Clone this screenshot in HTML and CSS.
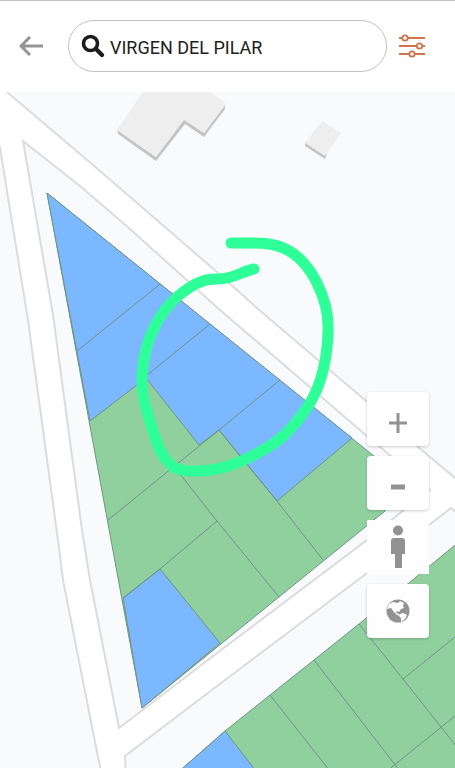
FILE: index.html
```
<!DOCTYPE html>
<html lang="es">
<head>
<meta charset="UTF-8">
<meta name="viewport" content="width=device-width, initial-scale=1.0">
<title>Mapa</title>
<link rel="stylesheet" href="styles.css">
</head>
<body>

<header class="topbar">
  <button class="icon-btn back" type="button" aria-label="Volver">
    <svg width="24" height="20" viewBox="0 0 24 20"><path d="M24 10H3M11 1L2 10l9 9" fill="none" stroke="#959595" stroke-width="3"/></svg>
  </button>
  <form class="search">
    <label for="q" aria-label="Buscar">
      <svg width="24" height="24" viewBox="0 0 24 24"><circle cx="9.500" cy="9.500" r="7" fill="none" stroke="#1c1c1c" stroke-width="3.600"/><path d="M15 15l6 6" stroke="#1c1c1c" stroke-width="4.200" stroke-linecap="round"/></svg>
    </label>
    <input id="q" type="text" value="VIRGEN DEL PILAR">
  </form>
  <button class="icon-btn filters" type="button" aria-label="Filtros">
    <svg width="26" height="24" viewBox="0 0 26 24" fill="#fff" stroke="#d0744c" stroke-width="1.800">
      <path d="M0 4h26M0 12h26M0 20h26"/>
      <circle cx="6" cy="4" r="2.700"/>
      <circle cx="20.500" cy="12" r="2.700"/>
      <circle cx="13" cy="20" r="2.700"/>
    </svg>
  </button>
</header>

<main class="map">
  <svg class="map-canvas" viewBox="0 92 455 676" preserveAspectRatio="xMinYMin slice" aria-hidden="true">
    <!-- blocks between the streets -->
    <g class="block">
      <path d="M-5 82L7 92 100 171 217 272 258 309 365 400 418 447 460 482V80z"/>
      <path d="M-5 130L0 148 28 320 58 540 63 580 98 757 102 775H-5z"/>
      <path d="M23 141L80 186 130 229 220 310 367 436 392 457 430 490 400 513 367 540 225 647 119 728 90 580 82 530 53 315z"/>
      <path d="M126 775L125 756 225 680 367 573 451 508 460 515V775z"/>
    </g>

    <g class="building">
      <path class="wall" d="M117 130l1 4 38 27 29-37 19 13 21-28v-4l-21 28-20-14-28 38z"/>
      <path d="M143 92L117 130l39 27 28-37 20 13 22-29-16-12z"/>
      <path class="wall" d="M305 142v4l20 13 2-5z"/>
      <path d="M322 121l-17 22 20 13 16-23z"/>
    </g>

    <!-- parcels -->
    <path class="free" d="M47 193L410 485 385 511 142 708z"/>
    <path class="taken" d="M47 193L352 438 277 501 219 430 199 445 146 378 90 421z"/>
    <path class="taken" d="M123 598L160 569 220 643 142 708z"/>
    <path class="free" d="M175 775L225 731 270 695 314 660 359 624 460 541V775z"/>
    <path class="taken" d="M175 775L225 731 259 775z"/>
    <path class="limits" d="M77 351L160 284M146 376L210 324M108 520L219 430 280 380M123 598L160 569 217 521
      M219 430L277 501 323 560M172 464L217 521 279 597
      M270 695L333 775M314 660L403 775M359 624L403 679 460 751M403 679L460 633M382 775L460 712"/>

    <!-- hand drawn mark -->
    <path class="mark" d="M231 243C252 243 267 242 281 247C297 253 309 267 317 283C325 299 329 315 328 333C327 359 322 383 310 403C298 422 283 440 263 450C241 463 219 471 197 471C187 471 178 471 172 466C163 458 159 449 155 437C148 415 141 396 142 377C143 359 146 344 153 330C159 317 167 306 177 297C185 290 194 284 203 281C211 278 219 280 227 278C237 276 244 271 254 269"/>
  </svg>

  <div class="controls">
    <button type="button" aria-label="Acercar">
      <svg class="low" width="20" height="20" viewBox="0 0 20 20"><path d="M10 0v20M1 10h18" stroke="#929292" stroke-width="3"/></svg>
    </button>
    <button type="button" aria-label="Alejar">
      <svg class="low" width="20" height="20" viewBox="0 0 20 20"><path d="M3 10h14" stroke="#929292" stroke-width="5"/></svg>
    </button>
    <button class="square" type="button" aria-label="Vista de calle">
      <svg width="16" height="44" viewBox="0 0 16 44" fill="#929292"><circle cx="8" cy="5.500" r="5"/><path d="M4 13h8q3 0 3 3v13h-3v14H5V29H1V16q0-3 3-3z"/></svg>
    </button>
    <button type="button" aria-label="Tipo de mapa">
      <svg width="24" height="24" viewBox="0 0 24 24">
        <circle cx="12" cy="12" r="11.500" fill="#929292"/>
        <path d="M3 5l4-2 5 1 2-2 4 2-1 3 1 2-3 1-2 3-2-1-1 2 3 1 1 2-3-1-3-3-3-4-4 1z" fill="#fff"/>
        <path d="M14 15l3-1 4 2-2 4-4 3v-4l-2-2z" fill="#fff"/>
      </svg>
    </button>
  </div>
</main>

</body>
</html>
```
FILE: styles.css
```
* {
  box-sizing: border-box;
}
body {
  display: flex;
  flex-direction: column;
  min-height: 100vh;
  margin: 0;
  background-color: #fff;
  font-family: Roboto, Arial, sans-serif;
}
button {
  display: flex;
  justify-content: center;
  align-items: center;
  padding: 0;
  border: none;
  background: #fefefe;
  cursor: pointer;
}
.topbar {
  display: flex;
  align-items: center;
  gap: 12px;
  padding: 19px 30px 20px 19px;
  border-top: 1px solid #c2c2c2;
}
.icon-btn {
  flex: none;
  height: 24px;
  background: none;
}
.back {
  width: 24px;
  margin-right: 13px;
}
.search {
  display: flex;
  flex: 1;
  align-items: center;
  gap: 5px;
  min-width: 0;
  height: 52px;
  padding: 0 20px 0 12px;
  border: 1px solid #c2c2c2;
  border-radius: 26px;
}
.search label {
  display: flex;
}
.search input {
  flex: 1;
  min-width: 0;
  padding: 2px 0 0;
  border: none;
  outline: none;
  background: none;
  color: #202020;
  font-family: inherit;
  font-size: 18px;
}
.map {
  position: relative;
  flex: 1;
  overflow: hidden;
  min-height: 400px;
}
.map-canvas {
  position: absolute;
  width: 100%;
  height: 100%;
}
.block {
  fill: #f8fafc;
  stroke: #dcdcdc;
  stroke-width: 2;
}
.building {
  fill: #eee;
}
.building .wall {
  fill: #c4c4c4;
}
.free,
.taken,
.limits {
  stroke: #6f9583;
  stroke-width: 1;
}
.free {
  fill: #90d09f;
}
.taken {
  fill: #7bb8ff;
}
.limits {
  fill: none;
}
.mark {
  fill: none;
  stroke: #2fff98;
  stroke-width: 11;
  stroke-linecap: round;
  stroke-linejoin: round;
}
.controls {
  position: absolute;
  right: 26px;
  bottom: 130px;
  display: flex;
  flex-direction: column;
  gap: 10px;
}
.controls button {
  width: 62px;
  height: 54px;
  border-radius: 4px;
  box-shadow: 0 1px 3px rgba(0, 0, 0, 0.2);
}
.controls .square {
  border-radius: 0;
  box-shadow: none;
}
.low {
  margin-top: 8px;
}
```
